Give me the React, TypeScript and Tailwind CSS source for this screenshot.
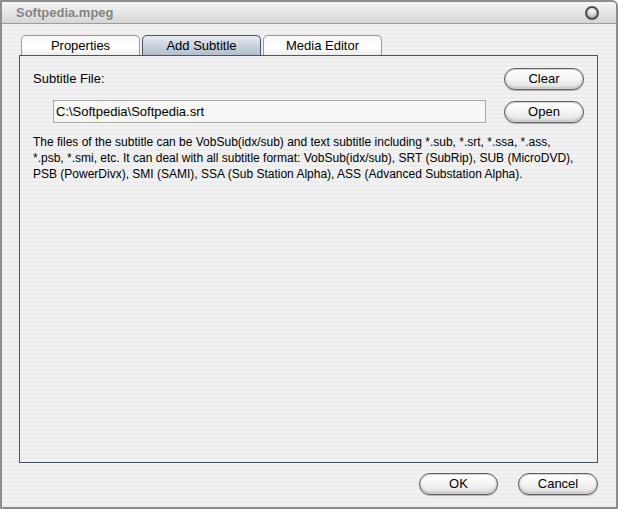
import React from 'react';

const font = { fontFamily: '"Liberation Sans", Arial, sans-serif' };

function PillButton({ label, className = '' }: { label: string; className?: string }) {
  return (
    <button
      className={`h-[22px] rounded-full border border-[#5f5f5f] bg-[linear-gradient(#ffffff,#f6f6f6_45%,#e0e0e0)] text-[13px] text-black shadow-[inset_0_0_0_1px_#d4d4d4,inset_0_-2px_2px_#c4c4c4,0_1px_1px_#b0b0b0] ${className}`}
    >
      {label}
    </button>
  );
}

function Tab({ label, active }: { label: string; active?: boolean }) {
  return (
    <div
      className={`flex h-[20px] w-[119px] items-center justify-center rounded-t-[5px] border border-b-0 text-[13px] text-black ${
        active
          ? 'border-[#4b5562] bg-[linear-gradient(#e6ebf1,#c5cfdb_60%,#b3bfcd)]'
          : 'border-[#9a9a9a] bg-[linear-gradient(#f7f7f7,#ffffff_60%,#ececec)]'
      }`}
    >
      {label}
    </div>
  );
}

export default function App() {
  return (
    <div
      style={font}
      className="flex h-[509px] w-[618px] flex-col overflow-hidden rounded-tr-[6px] border-2 border-[#8e8e8e] bg-[repeating-linear-gradient(0deg,#ececec_0px,#ececec_2px,#f2f2f2_2px,#f2f2f2_4px)]"
    >
      {/* Title bar */}
      <div className="flex h-[22px] shrink-0 items-center justify-between border-b border-[#9c9c9c] bg-[linear-gradient(#f5f5f5,#e6e6e6_50%,#d6d6d6)] pl-[14px] pr-[17px]">
        <span className="text-[13px] font-bold text-[#858585]">Softpedia.mpeg</span>
        <div className="h-[14px] w-[14px] rounded-full border-2 border-[#4e4e4e] bg-[radial-gradient(circle_at_50%_30%,#ffffff,#c9ccd0_55%,#8b9096)]" />
      </div>

      {/* Body */}
      <div className="flex flex-1 flex-col pl-[17px] pr-[18px] pt-[11px]">
        <div className="flex gap-[2px] pl-[2px]">
          <Tab label="Properties" />
          <Tab label="Add Subtitle" active />
          <Tab label="Media Editor" />
        </div>

        <div className="flex h-[408px] flex-col border border-[#4b5562] px-[13px] pt-[12px]">
          <div className="flex items-center justify-between">
            <span className="text-[13px] text-black">Subtitle File:</span>
            <PillButton label="Clear" className="w-[80px]" />
          </div>
          <div className="mt-[10px] flex items-center justify-between">
            <div className="ml-[20px] flex h-[23px] w-[433px] items-center border border-[#a8a8a8] bg-[#f7f7f4] px-[2px] text-[13px] text-black">
              C:\Softpedia\Softpedia.srt
            </div>
            <PillButton label="Open" className="w-[80px]" />
          </div>
          <p className="mt-[11px] text-[12px] leading-[16px] text-black">
            The files of the subtitle can be VobSub(idx/sub) and text subtitle including *.sub, *.srt, *.ssa, *.ass,
            <br />
            *.psb, *.smi, etc. It can deal with all subtitle format: VobSub(idx/sub), SRT (SubRip), SUB (MicroDVD),
            <br />
            PSB (PowerDivx), SMI (SAMI), SSA (Sub Station Alpha), ASS (Advanced Substation Alpha).
          </p>
        </div>

        <div className="mt-[10px] flex justify-end gap-[20px]">
          <PillButton label="OK" className="w-[79px]" />
          <PillButton label="Cancel" className="w-[80px]" />
        </div>
      </div>
    </div>
  );
}
